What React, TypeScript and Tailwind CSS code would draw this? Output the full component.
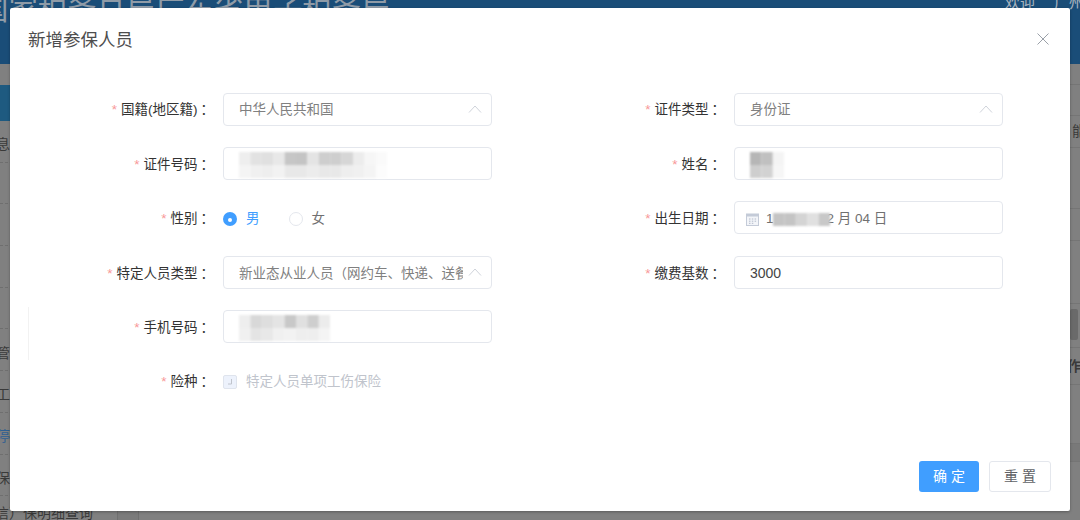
const font = "font-['Liberation_Sans','Noto_Sans_CJK_SC',sans-serif]";

const sideRows = [
  { text: "息", cls: "text-[#3a3a3a]" },
  { text: "", cls: "" },
  { text: "", cls: "" },
  { text: "", cls: "" },
  { text: "", cls: "" },
  { text: "管", cls: "text-[#3a3a3a]" },
  { text: "工", cls: "text-[#3a3a3a]" },
  { text: "停", cls: "text-[#2f5f92]" },
  { text: "保", cls: "text-[#3a3a3a]" },
];

function Chevron() {
  return (
    <svg width="14" height="8" viewBox="0 0 14 8" fill="none" className="shrink-0">
      <polyline points="1,7.5 7,1 13,7.5" stroke="#cfd3da" strokeWidth="1" />
    </svg>
  );
}

function CalendarIcon() {
  return (
    <svg width="13" height="13" viewBox="0 0 13 13" fill="none" className="shrink-0">
      <rect x="0.5" y="1" width="12" height="11.5" fill="#f3f5f9" stroke="#c4cbd8" />
      <rect x="0.5" y="1" width="12" height="2.5" fill="#c4cbd8" />
      <path d="M3 6h1.5M5.8 6h1.5M8.6 6h1.5M3 8.2h1.5M5.8 8.2h1.5M8.6 8.2h1.5M3 10.3h1.5M5.8 10.3h1.5" stroke="#b3bbca" />
    </svg>
  );
}

// pixelated smudge covering private data, values are grey levels per cell
function Mosaic({ rows, cell, className }: { rows: number[][]; cell: number; className?: string }) {
  const h = rows.length * 13;
  const w = rows[0].length * cell;
  return (
    <svg width={w} height={h} className={className}>
      {rows.map((row, y) =>
        row.map((v, x) => (
          <rect
            key={`${x}-${y}`}
            x={x * cell}
            y={y * 13}
            width={cell}
            height={13}
            fill={`rgb(${v},${v},${v})`}
          />
        )),
      )}
    </svg>
  );
}

function Field({ label, children }: { label: string; children: React.ReactNode }) {
  return (
    <div className="flex h-[33px] items-center">
      <label className="w-[203px] shrink-0 pr-[9px] pt-[3px] text-right text-[13.5px] text-[#333]">
        <span className="mr-[4px] text-[#f89898]">*</span>
        {label}
        <span className="ml-[3px]">：</span>
      </label>
      {children}
    </div>
  );
}

function Box({ children }: { children?: React.ReactNode }) {
  return (
    <div className="flex h-[33px] w-[269px] items-center rounded-[4px] border border-[#e4e7ed] bg-white px-[15px] pt-[3px] text-[13.5px]">
      {children}
    </div>
  );
}

function SelectBox({ value }: { value: string }) {
  return (
    <Box>
      <span className="min-w-0 flex-1 overflow-hidden whitespace-nowrap text-[#808080]">{value}</span>
      <span className="-mr-[6px] -mt-[3px] ml-[5px]">
        <Chevron />
      </span>
    </Box>
  );
}

export default function App() {
  return (
    <div className={`${font} relative h-[520px] w-[1080px] overflow-hidden bg-[#808080]`}>
      {/* dimmed page behind the dialog */}
      <div className="h-[64px] overflow-hidden bg-[#1a4d78]">
        <div className="flex items-start justify-between">
          <span className="-ml-[21px] -mt-[11px] whitespace-nowrap text-[29.4px] leading-[40px] text-[#8f9ba7]">
            国家税务总局广东省电子税务局
          </span>
          <span className="-mr-[4px] -mt-[7px] flex gap-[19px] whitespace-nowrap text-[15px] leading-[20px] text-[#a9b4bf]">
            <span>欢迎</span>
            <span>广州</span>
          </span>
        </div>
      </div>
      <div className="flex">
        <div className="w-[118px] shrink-0 border-r border-[#707070]">
          <div className="h-[21px]" />
          <div className="h-[36px] bg-[#1e5a80]" />
          {sideRows.map((r, i) => (
            <div
              key={i}
              className="flex h-[41.7px] items-center border-b border-dashed border-[#6f6f6f] pt-[7px] text-[14px]"
            >
              <span className={`-ml-[4px] ${r.cls}`}>{r.text}</span>
            </div>
          ))}
          <div className="-ml-[19px] mt-[5px] whitespace-nowrap text-[14px] leading-[24px] text-[#3a3a3a]">（信）保明细查询</div>
        </div>
        <div className="w-[21px] shrink-0 border-r border-[#707070] bg-[#7b7b7b]" />
        <div className="flex-1 text-[14px] text-[#3a3a3a]">
          <div className="h-[21px] border-b border-[#757575]" />
          <div className="h-[31px] border-b border-[#757575]" />
          <div className="flex h-[32px] items-center justify-end overflow-hidden border-b border-[#757575]">
            <span className="-mr-[6px]">能</span>
          </div>
          <div className="h-[61px] border-b border-[#757575]" />
          <div className="h-[32px] border-b border-[#757575]" />
          <div className="h-[63px] border-b border-[#757575]" />
          <div className="flex h-[44px] items-start justify-end border-b border-[#757575]">
            <div className="mr-[2px] mt-[5px] h-[31px] w-[8px] rounded-[2px] bg-[#6a6a6a]" />
          </div>
          <div className="flex h-[37px] items-center justify-end overflow-hidden border-b border-[#757575] font-bold">
            <span className="-mr-[1px]">作</span>
          </div>
          <div className="h-[59px] border-b border-[#757575]" />
          <div className="h-[18px] border-b border-[#757575] bg-[#797979]" />
        </div>
      </div>

      {/* dialog */}
      <div className="absolute left-[10px] top-[8px] flex h-[503px] w-[1060px] flex-col rounded-[2px] bg-white shadow-[0_1px_3px_rgba(0,0,0,0.3)]">
        <div className="flex items-start justify-between px-[18px] pt-[20px]">
          <span className="text-[17.5px] leading-[24px] text-[#4d4d4d]">新增参保人员</span>
          <svg width="12" height="12" viewBox="0 0 12 12" fill="none" className="mr-[3px] mt-[5px]">
            <path d="M0.5 0.5l11 11M11.5 0.5l-11 11" stroke="#9aa0a8" strokeWidth="1" />
          </svg>
        </div>

        <div className="mt-[40.5px] grid grid-cols-[511px_511px] gap-y-[21.4px] pl-[10px]">
          <Field label="国籍(地区籍)">
            <SelectBox value="中华人民共和国" />
          </Field>
          <Field label="证件类型">
            <SelectBox value="身份证" />
          </Field>

          <Field label="证件号码">
            <Box>
              <Mosaic
                className="blur-[0.8px]"
                cell={11.4}
                rows={[
                  [238, 226, 224, 232, 198, 196, 228, 206, 206, 214, 236, 246, 250],
                  [244, 240, 238, 242, 232, 232, 236, 232, 232, 238, 240, 244, 252],
                ]}
              />
            </Box>
          </Field>
          <Field label="姓名">
            <Box>
              <Mosaic
                className="blur-[0.8px]"
                cell={11.4}
                rows={[
                  [182, 192, 244],
                  [206, 210, 246],
                ]}
              />
            </Box>
          </Field>

          <Field label="性别">
            <div className="flex items-center pt-[3px] text-[13.5px]">
              <span className="flex size-[14px] items-center justify-center rounded-full bg-[#409eff]">
                <span className="mt-[2px] size-[4px] rounded-full bg-white" />
              </span>
              <span className="ml-[9px] text-[#409eff]">男</span>
              <span className="ml-[29px] size-[14px] rounded-full border border-[#e4e7ed] bg-white" />
              <span className="ml-[9px] text-[#707070]">女</span>
            </div>
          </Field>
          <Field label="出生日期">
            <Box>
              <span className="-ml-[4px] flex items-center text-[#707070]">
                <CalendarIcon />
                <span className="ml-[7px]">1</span>
                <Mosaic
                  className="-my-[2px] -ml-[1px] blur-[0.8px]"
                  cell={11.4}
                  rows={[[196, 196, 212, 224, 200]]}
                />
                <span className="-ml-[3px] whitespace-pre">2 月 04 日</span>
              </span>
            </Box>
          </Field>

          <Field label="特定人员类型">
            <SelectBox value="新业态从业人员（网约车、快递、送餐" />
          </Field>
          <Field label="缴费基数">
            <Box>
              <span className="text-[14px] text-[#444]">3000</span>
            </Box>
          </Field>

          <Field label="手机号码">
            <Box>
              <Mosaic
                className="blur-[0.8px]"
                cell={11.4}
                rows={[
                  [238, 216, 222, 228, 200, 224, 206, 236],
                  [240, 228, 232, 240, 242, 238, 238, 244],
                ]}
              />
            </Box>
          </Field>
          <div />

          <Field label="险种">
            <div className="flex items-center pt-[3px] text-[13.5px]">
              <span className="flex size-[14px] items-center justify-center rounded-[2px] border border-[#dfe4ed] bg-[#edf2fc]">
                <svg width="8" height="8" viewBox="0 0 8 8" fill="none">
                  <path d="M5.5 1v5H2" stroke="#c0c4cc" />
                </svg>
              </span>
              <span className="ml-[9px] text-[#c0c4cc]">特定人员单项工伤保险</span>
            </div>
          </Field>
        </div>

        <div className="mt-auto flex justify-end gap-[10px] pb-[19px] pr-[19px]">
          <button className="h-[31px] w-[60px] rounded-[3px] bg-[#409eff] pl-[4px] text-[14px] tracking-[4px] text-white">
            确定
          </button>
          <button className="h-[31px] w-[62px] rounded-[3px] border border-[#e4e7ed] bg-white pl-[4px] text-[14px] tracking-[4px] text-[#606266]">
            重置
          </button>
        </div>

        <div className="absolute left-[18px] top-[299px] h-[53px] w-px bg-[#f2f2f2]" />
      </div>
    </div>
  );
}
